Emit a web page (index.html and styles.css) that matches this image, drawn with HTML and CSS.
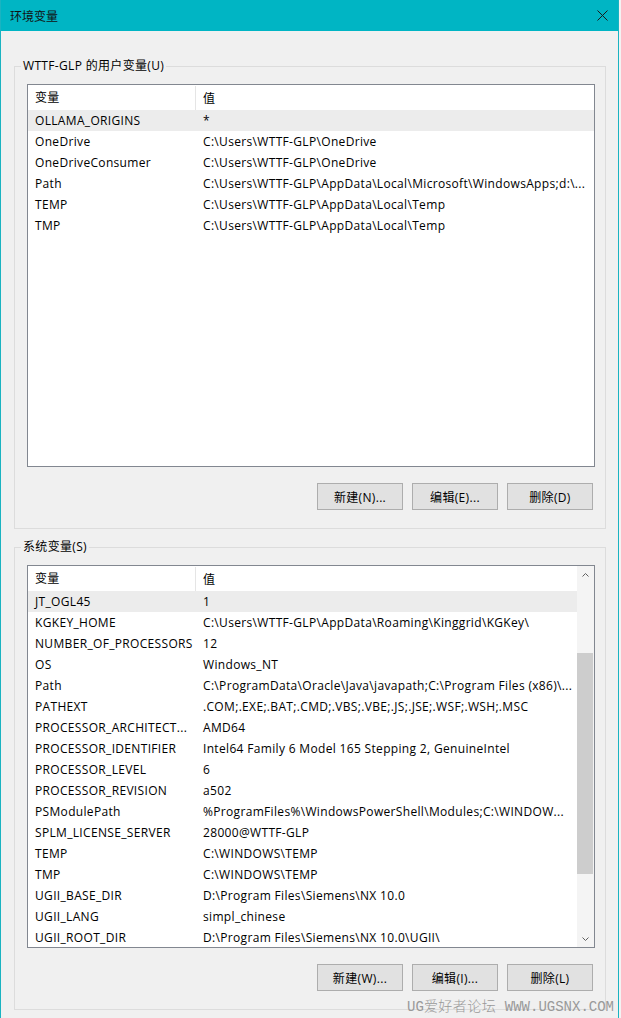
FILE: index.html
```html
<!DOCTYPE html>
<html lang="zh-CN">
<head>
    <meta charset="UTF-8">
    <meta name="viewport" content="width=device-width, initial-scale=1.0">
    <title>环境变量</title>
    <link rel="stylesheet" href="styles.css">
</head>
<body>
    <div class="window">
        <!-- Barra de título -->
        <div class="titlebar">
            <span class="title">环境变量</span>
            <svg class="close" width="11" height="11" viewBox="0 0 11 11">
                <path d="M0.5 0.5 L10.5 10.5 M10.5 0.5 L0.5 10.5" stroke="#1a1a1a" stroke-width="1" fill="none"/>
            </svg>
        </div>

        <div class="content">
            <!-- Variables de usuario -->
            <fieldset class="group">
                <legend>WTTF-GLP 的用户变量(U)</legend>
                <div class="group-body">
                    <div class="list">
                        <div class="list-body">
                            <div class="list-head">
                                <div class="col-name">变量</div>
                                <div class="col-value">值</div>
                            </div>
                            <div class="row selected"><div class="col-name">OLLAMA_ORIGINS</div><div class="col-value">*</div></div>
                            <div class="row"><div class="col-name">OneDrive</div><div class="col-value">C:\Users\WTTF-GLP\OneDrive</div></div>
                            <div class="row"><div class="col-name">OneDriveConsumer</div><div class="col-value">C:\Users\WTTF-GLP\OneDrive</div></div>
                            <div class="row"><div class="col-name">Path</div><div class="col-value">C:\Users\WTTF-GLP\AppData\Local\Microsoft\WindowsApps;d:\...</div></div>
                            <div class="row"><div class="col-name">TEMP</div><div class="col-value">C:\Users\WTTF-GLP\AppData\Local\Temp</div></div>
                            <div class="row"><div class="col-name">TMP</div><div class="col-value">C:\Users\WTTF-GLP\AppData\Local\Temp</div></div>
                        </div>
                    </div>
                    <div class="buttons">
                        <button class="btn">新建(N)...</button>
                        <button class="btn">编辑(E)...</button>
                        <button class="btn">删除(D)</button>
                    </div>
                </div>
            </fieldset>

            <!-- Variables del sistema -->
            <fieldset class="group group-system">
                <legend>系统变量(S)</legend>
                <div class="group-body">
                    <div class="list">
                        <div class="list-body">
                            <div class="list-head">
                                <div class="col-name">变量</div>
                                <div class="col-value">值</div>
                            </div>
                            <div class="row selected"><div class="col-name">JT_OGL45</div><div class="col-value">1</div></div>
                            <div class="row"><div class="col-name">KGKEY_HOME</div><div class="col-value">C:\Users\WTTF-GLP\AppData\Roaming\Kinggrid\KGKey\</div></div>
                            <div class="row"><div class="col-name">NUMBER_OF_PROCESSORS</div><div class="col-value">12</div></div>
                            <div class="row"><div class="col-name">OS</div><div class="col-value">Windows_NT</div></div>
                            <div class="row"><div class="col-name">Path</div><div class="col-value">C:\ProgramData\Oracle\Java\javapath;C:\Program Files (x86)\...</div></div>
                            <div class="row"><div class="col-name">PATHEXT</div><div class="col-value">.COM;.EXE;.BAT;.CMD;.VBS;.VBE;.JS;.JSE;.WSF;.WSH;.MSC</div></div>
                            <div class="row"><div class="col-name">PROCESSOR_ARCHITECT...</div><div class="col-value">AMD64</div></div>
                            <div class="row"><div class="col-name">PROCESSOR_IDENTIFIER</div><div class="col-value">Intel64 Family 6 Model 165 Stepping 2, GenuineIntel</div></div>
                            <div class="row"><div class="col-name">PROCESSOR_LEVEL</div><div class="col-value">6</div></div>
                            <div class="row"><div class="col-name">PROCESSOR_REVISION</div><div class="col-value">a502</div></div>
                            <div class="row"><div class="col-name">PSModulePath</div><div class="col-value">%ProgramFiles%\WindowsPowerShell\Modules;C:\WINDOW...</div></div>
                            <div class="row"><div class="col-name">SPLM_LICENSE_SERVER</div><div class="col-value">28000@WTTF-GLP</div></div>
                            <div class="row"><div class="col-name">TEMP</div><div class="col-value">C:\WINDOWS\TEMP</div></div>
                            <div class="row"><div class="col-name">TMP</div><div class="col-value">C:\WINDOWS\TEMP</div></div>
                            <div class="row"><div class="col-name">UGII_BASE_DIR</div><div class="col-value">D:\Program Files\Siemens\NX 10.0</div></div>
                            <div class="row"><div class="col-name">UGII_LANG</div><div class="col-value">simpl_chinese</div></div>
                            <div class="row"><div class="col-name">UGII_ROOT_DIR</div><div class="col-value">D:\Program Files\Siemens\NX 10.0\UGII\</div></div>
                        </div>
                        <!-- Barra de desplazamiento -->
                        <div class="scrollbar">
                            <div class="arrow">
                                <svg width="7" height="4" viewBox="0 0 7 4"><path d="M0.5 3.5 L3.5 0.5 L6.5 3.5" stroke="#606060" fill="none"/></svg>
                            </div>
                            <div class="track">
                                <div class="thumb"></div>
                            </div>
                            <div class="arrow">
                                <svg width="7" height="4" viewBox="0 0 7 4"><path d="M0.5 0.5 L3.5 3.5 L6.5 0.5" stroke="#606060" fill="none"/></svg>
                            </div>
                        </div>
                    </div>
                    <div class="buttons">
                        <button class="btn">新建(W)...</button>
                        <button class="btn">编辑(I)...</button>
                        <button class="btn">删除(L)</button>
                    </div>
                </div>
            </fieldset>
        </div>

        <div class="watermark">UG<span class="cjk">爱好者论坛</span> WWW.UGSNX.COM</div>
    </div>
</body>
</html>
```

FILE: styles.css
```css
html {
    background: #f3f3f3;
}

body {
    margin: 0;
    font-family: "Open Sans", "Noto Sans CJK SC", sans-serif;
    font-size: 12px;
    letter-spacing: 0.33px;
    color: #000;
}

.window {
    position: relative;
    width: 617px;
    height: 1018px;
    background: #f0f0f0;
    border-left: 1px solid #1ab3c1;
    border-right: 1px solid #1ab3c1;
    overflow: hidden;
}

.titlebar {
    height: 31px;
    background: #00b5c4;
    display: flex;
    align-items: center;
    justify-content: space-between;
    padding: 0 10px 0 9px;
}

.title {
    font-family: "Noto Sans CJK SC", sans-serif;
    font-size: 12px;
    letter-spacing: 0;
    color: #111;
}

.content {
    padding: 27px 12px 0 13px;
}

.group {
    margin: 0;
    padding: 0;
    border: 1px solid #dcdcdc;
    min-width: 0;
}

.group-system {
    margin-top: 10px;
}

.group-body {
    padding: 0 10px 18px 12px;
}

legend {
    margin-left: 6px;
    padding: 0 2px;
    line-height: 16px;
    color: #000;
}

.list {
    margin-top: 10px;
    height: 383px;
    box-sizing: border-box;
    border: 1px solid #828790;
    background: #fff;
    display: flex;
}

.list-body {
    flex: 1;
    overflow: hidden;
    padding-top: 1px;
}

.list-head {
    display: flex;
    height: 24px;
    align-items: center;
}

.list-head .col-name {
    border-right: 1px solid #e5e5e5;
    height: 24px;
    line-height: 24px;
}

.row {
    display: flex;
    height: 21px;
    line-height: 21px;
    white-space: nowrap;
}

.row.selected {
    background: #ececec;
}

.col-name {
    width: 168px;
    flex: none;
    box-sizing: border-box;
    padding-left: 7px;
    overflow: hidden;
    white-space: nowrap;
}

.col-value {
    flex: 1;
    padding-left: 7px;
    overflow: hidden;
    white-space: nowrap;
}

.scrollbar {
    width: 17px;
    flex: none;
    background: #f4f4f4;
    display: flex;
    flex-direction: column;
}

.arrow {
    height: 17px;
    display: flex;
    align-items: center;
    justify-content: center;
}

.track {
    flex: 1;
}

.thumb {
    margin: 70px 1px 0 0;
    height: 221px;
    background: #cdcdcd;
}

.buttons {
    display: flex;
    justify-content: flex-end;
    gap: 9px;
    margin-top: 16px;
    padding-right: 2px;
}

.btn {
    width: 86px;
    height: 27px;
    padding: 0;
    background: #e1e1e1;
    border: 1px solid #adadad;
    font-family: "Open Sans", "Noto Sans CJK SC", sans-serif;
    font-size: 12px;
    letter-spacing: 0.33px;
    color: #000;
}

.watermark {
    position: absolute;
    right: 4px;
    top: 995px;
    font-family: "Liberation Mono", "Noto Sans CJK SC", monospace;
    font-size: 14px;
    letter-spacing: 0;
    color: #999;
    white-space: nowrap;
}

.watermark .cjk {
    letter-spacing: 0.5px;
    font-weight: 300;
}
```
